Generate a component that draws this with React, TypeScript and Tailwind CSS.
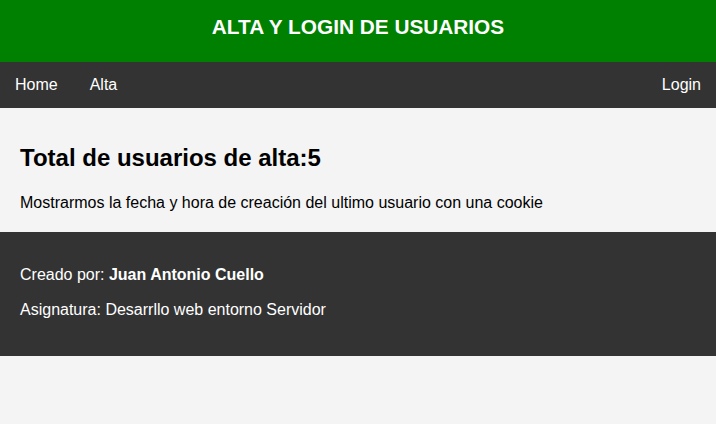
export default function App() {
  return (
    <div className="min-h-screen bg-[#f4f4f4] font-['Liberation_Sans',Arial,sans-serif] text-black">
      <header className="h-[62px] bg-[#008000] pt-[15px] text-center">
        <h1 className="text-[20.8px] font-bold leading-[24px] text-white">ALTA Y LOGIN DE USUARIOS</h1>
      </header>

      <nav className="flex justify-between bg-[#333333] text-[16px] text-white">
        <div className="flex">
          <a href="#" className="pl-[15px] pr-4 py-[14px] leading-[18px]">Home</a>
          <a href="#" className="px-4 py-[14px] leading-[18px]">Alta</a>
        </div>
        <a href="#" className="pl-4 pr-[15px] py-[14px] leading-[18px]">Login</a>
      </nav>

      <main className="px-5 pt-[36px] pb-[20px]">
        <h2 className="mb-[22px] text-[24px] font-bold leading-[28px]">Total de usuarios de alta:5</h2>
        <p className="text-[16px] leading-[18px]">
          Mostrarmos la fecha y hora de creación del ultimo usuario con una cookie
        </p>
      </main>

      <footer className="flex flex-col gap-[17px] bg-[#333333] px-5 pt-[34px] pb-[37px] text-[16px] leading-[18px] text-white">
        <p>
          Creado por: <strong className="font-bold">Juan Antonio Cuello</strong>
        </p>
        <p>Asignatura: Desarrllo web entorno Servidor</p>
      </footer>
    </div>
  );
}
